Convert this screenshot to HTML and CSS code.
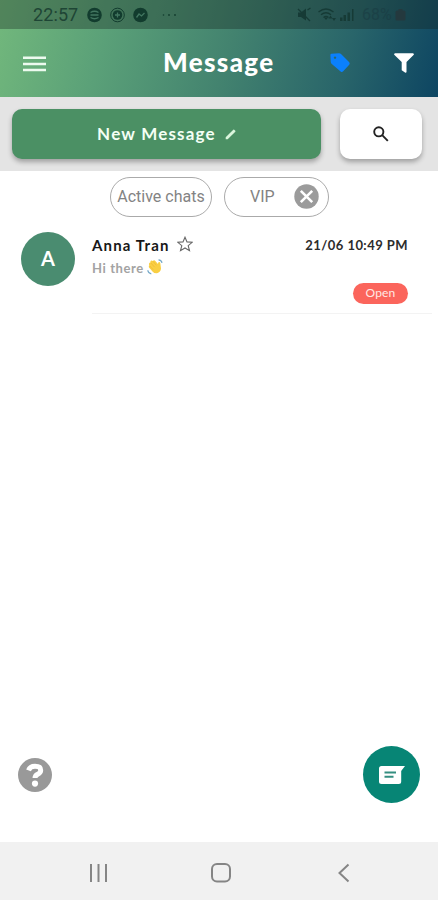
FILE: index.html
```html
<!DOCTYPE html>
<html lang="en">
<head>
<meta charset="utf-8">
<title>Message</title>
<link rel="stylesheet" href="styles.css">
</head>
<body>
<div class="screen">
  <div class="top">
    <div class="status">
      <span class="clock">22:57</span>
      <svg class="notes" width="90" height="16" viewBox="0 0 90 16">
        <circle cx="7.500" cy="8" r="7.300"/>
        <path class="cut" d="M3.500 5.500q4-2.500 8 0M3.500 8h8M3.500 10.500q4 2.500 8 0"/>
        <circle class="ring" cx="30.500" cy="8" r="6.800"/>
        <circle cx="30.500" cy="8" r="4.800"/>
        <path class="cut" d="M30.500 5.500v5M28 8h5"/>
        <circle cx="53.500" cy="8" r="7.300"/>
        <path class="cut" d="M49.500 10.500l2.500-3.500 2.500 2 3-3"/>
        <circle cx="76.500" cy="8" r=".8"/><circle cx="82" cy="8" r=".9"/><circle cx="88" cy="8" r=".9"/>
      </svg>
      <span class="spacer"></span>
      <svg class="signals" width="58" height="16" viewBox="0 0 58 16">
        <path d="M1 5.500h3l5-4v12l-5-3.500H1z"/>
        <path class="line" d="M1 2l12 12M10.500 3l3-2"/>
        <path class="line" d="M21.500 5q7.500-6 15 0M24 7.800q5-4 10 0M26.500 10.500q2.500-2 5 0"/>
        <path d="M27 10.500h4L29 13z"/>
        <path d="M33.500 8.500l2 3h-4zM37 14l-2-3h4zM43 10.500h2.500V14H43zM46.500 8H49v6h-2.500zM50.500 5.500H53V14h-2.500zM55 2h1.500v12H55z"/>
      </svg>
      <span class="percent">68%</span>
      <svg class="battery" width="11" height="14" viewBox="0 0 11 14"><path d="M3.500 1h4v1.500H9q1.500 0 1.500 1.500v7q0 1.500-1.500 1.500H2Q.5 12.500.5 11V4Q.5 2.500 2 2.500h1.500z"/></svg>
    </div>
    <div class="appbar">
      <svg class="menu" width="23" height="16" viewBox="0 0 23 16"><path d="M0 .5h23v2.500H0zM0 6.700h23v2.500H0zM0 12.800h23v2.500H0z"/></svg>
      <h1 class="title">Message</h1>
      <svg class="tag" width="20" height="20" viewBox="0 0 20 20"><path fill-rule="evenodd" d="M1.500.8 9 .3q1.200 0 2 .8l8 8q1.400 1.400 0 2.800l-5.800 6.400q-1.300 1.300-2.600.2L1.800 11Q.7 10 .7 8.500L.4 2Q.4.900 1.500.8zM5 3.400a1.200 1.200 0 1 0 .01 0z"/></svg>
      <svg class="filter" width="20" height="20" viewBox="0 0 20 20"><path d="M1 .3h18q1.500.6.5 1.800L12.500 9v10q-.3 1.200-1.500.5l-3.300-2.300V9L.5 2.100Q-.5.900 1 .3z"/></svg>
    </div>
  </div>
  <div class="tools">
    <button class="new"><span class="new-text">New Message</span>
      <svg width="11" height="11" viewBox="0 0 11 11"><path d="M.7 10.300V8.300L8.300.7q.4-.4.900 0l1.100 1.100q.4.500 0 .9L2.700 10.300z"/></svg>
    </button>
    <button class="search" aria-label="Search">
      <svg width="16" height="16" viewBox="0 0 16 16"><circle cx="5.800" cy="5.800" r="4.600"/><path d="M9.200 9.200l5.600 5.600"/></svg>
    </button>
  </div>
  <div class="chips">
    <span class="chip chats">Active chats</span>
    <span class="chip vip"><span>VIP</span>
      <svg width="25" height="25" viewBox="0 0 25 25"><circle cx="12.500" cy="12.500" r="12.200"/><path d="M6.800 6.800l11.400 11.400M18.200 6.800L6.800 18.200"/></svg>
    </span>
  </div>
  <div class="chat">
    <div class="avatar">A</div>
    <div class="body">
      <div class="line1">
        <span class="name">Anna Tran</span>
        <svg class="star" width="16" height="16" viewBox="0 0 16 16"><path d="M8 1.200l2 4.700 5.200.4-4 3.400 1.300 5L8 12l-4.500 2.700 1.300-5-4-3.400L6 5.900z"/></svg>
        <span class="spacer"></span>
        <span class="date">21/06 10:49 PM</span>
      </div>
      <div class="line2">
        <span class="preview">Hi there</span>
        <svg class="wave" width="16" height="16" viewBox="0 0 16 16">
          <path class="hand" d="M2 5.300Q1.700 3.500 3.500 3.600L3.400 2.300Q4.300.9 5.700 1.900L6.500 1.500Q7.500.9 8.300 1.900L11 5.100 11.200 3.500Q12.800 2.300 13.300 4.300L14 9.500Q13.700 13.300 10 14.200 7.300 14.500 5.500 12.400L2 8.500Q1.300 7.400 2.300 6.800z"/>
          <path class="finger" d="M3.700 3.800l4 4.400M5.900 2.200L9.300 6.300M2.500 6.700l3.700 4"/>
          <path class="motion" d="M11.500.9q3 .1 3.500 3M.8 11.300q.3 3 3.500 3.500"/>
        </svg>
      </div>
      <div class="line3"><span class="badge">Open</span></div>
    </div>
  </div>
  <div class="floor">
    <div class="help"><svg width="34" height="34" viewBox="0 0 34 34"><circle cx="17" cy="17" r="17"/><path d="M10.500 12.300Q12 8.300 17 8.300q5.700 0 5.700 3.900 0 2.500-3 4-2.700 1.300-2.700 3.900"/><circle class="dot" cx="17" cy="25.600" r="3.100"/></svg></div>
    <div class="compose"><svg width="26" height="18" viewBox="0 0 26 18"><path class="bubble" d="M2.500 0H26l-3.800 5v10.500q0 2.500-2.500 2.500H2.500Q0 18 0 15.500v-13Q0 0 2.500 0z"/><path class="rows" d="M5.500 6.500h11.500M5.500 10.800h9"/></svg></div>
  </div>
  <div class="nav">
    <svg width="20" height="20" viewBox="0 0 20 20"><path d="M3 1v18M10.500 1v18M18 1v18"/></svg>
    <svg width="20" height="20" viewBox="0 0 20 20"><rect x="1" y="1" width="18" height="17.500" rx="5"/></svg>
    <svg width="20" height="20" viewBox="0 0 20 20"><path d="M14.500 1.500L5.500 10l9 8.500"/></svg>
  </div>
</div>
</body>
</html>
```
FILE: styles.css
```css
* { box-sizing: border-box; }
body { margin: 0; background: #fff; font-family: Lato, "Open Sans", sans-serif; }
svg { display: block; flex: none; }
button { border: 0; padding: 0; font: inherit; }
.spacer { flex: 1; }
.screen { width: 438px; height: 900px; display: flex; flex-direction: column; overflow: hidden; }

.top { height: 97px; background: linear-gradient(105deg, #72b87c 0%, #5aa078 25%, #43836f 52%, #29656a 78%, #0d4562 100%); }
.status { height: 29px; background: rgba(20, 35, 30, .34); display: flex; align-items: center; padding: 0 32px 0 33px; }
.clock { font: 18px/29px Roboto, sans-serif; color: #1e4535; width: 46px; letter-spacing: .1px; }
.notes { margin-left: 8px; fill: #123c2e; }
.notes .cut { fill: none; stroke: #427660; stroke-width: 1.3; }
.notes .ring { fill: none; stroke: #123c2e; }
.signals { fill: #163b36; margin-right: 2px; }
.signals .line { fill: none; stroke: #163b36; stroke-width: 1.4; }
.percent { font: 16px/29px Roboto, sans-serif; color: #1a3c43; margin-left: 5px; width: 32px; opacity: .6; }
.battery { fill: #24393e; margin-left: 1px; }
.appbar { height: 68px; display: flex; align-items: center; padding: 0 24px 0 23px; }
.menu { fill: #edfaef; margin-top: 1px; }
.title { margin: -3px 0 0 117px; width: 112px; font-size: 26px; font-weight: 900; color: #fff; line-height: 34px; letter-spacing: 1.35px; white-space: nowrap; }
.tag { fill: #0b80fc; margin-left: 55px; }
.filter { fill: #fff; margin-left: auto; }

.tools { height: 74px; background: #e4e4e4; display: flex; padding: 12px 16px 12px 12px; gap: 19px; }
.new, .search { height: 50px; border-radius: 10px; box-shadow: 0 3px 5px rgba(0, 0, 0, .3); display: flex; align-items: center; justify-content: center; }
.new { width: 309px; background: #4b9064; color: #f4fff4; font-size: 17px; font-weight: 700; letter-spacing: 1.2px; gap: 9px; padding: 0 0 2px; }
.new svg { fill: #daf5dc; margin-top: 3px; }
.search { width: 82px; background: #fff; }
.search svg { fill: none; stroke: #222; stroke-width: 1.9; }

.chips { height: 46px; display: flex; gap: 12px; padding: 6px 0 0 110px; font: 16px/38px Roboto, sans-serif; color: #838383; }
.chip { height: 40px; border: 1px solid #aaa; border-radius: 20px; display: flex; align-items: center; }
.chats { width: 102px; justify-content: center; white-space: nowrap; }
.vip { width: 105px; padding: 0 9px 0 25px; justify-content: space-between; }
.vip svg { fill: #9b9b9b; margin-top: -2px; }
.vip svg path { stroke: #fff; stroke-width: 2.6; }

.chat { height: 97px; display: flex; padding-left: 21px; }
.avatar { width: 54px; height: 54px; margin-top: 15px; border-radius: 50%; background: #4a8c70; color: #fff; font: 700 20px/52px Lato, sans-serif; text-align: center; }
.body { margin-left: 17px; width: 340px; border-bottom: 1px solid #f3f3f3; padding-top: 16px; }
.line1, .line2, .line3 { display: flex; align-items: center; padding-right: 24px; white-space: nowrap; }
.line1 { height: 23px; }
.name { font-size: 15px; font-weight: 700; color: #181818; letter-spacing: 1.15px; }
.star { margin-left: 7px; margin-top: -2px; fill: none; stroke: #666; stroke-width: 1.1; }
.date { font-size: 13px; font-weight: 700; color: #2c2c2c; letter-spacing: .45px; }
.line2 { height: 24px; }
.preview { font-size: 13px; font-weight: 700; color: #a3a3a3; letter-spacing: .6px; }
.wave { margin-left: 3px; margin-top: -2px; }
.hand { fill: #f9cf43; }
.finger { fill: none; stroke: #e8ad2d; stroke-width: .5; }
.motion { fill: none; stroke: #75a9c8; stroke-width: 1.2; }
.line3 { height: 24px; justify-content: flex-end; padding-top: 2px; }
.badge { width: 55px; height: 21px; border-radius: 11px; background: #fb655c; color: #ffe9e5; font-size: 12px; line-height: 19px; letter-spacing: .2px; text-align: center; }

.floor { flex: 1; display: flex; align-items: flex-end; justify-content: space-between; padding: 0 18px 39px; }
.help { margin-bottom: 11px; }
.help svg { fill: #999; }
.help path { fill: none; stroke: #fff; stroke-width: 5; }
.help .dot { fill: #fff; }
.compose { width: 57px; height: 57px; border-radius: 50%; background: #078575; display: flex; align-items: center; justify-content: center; }
.bubble { fill: #fff; }
.rows { fill: none; stroke: #348e80; stroke-width: 2; }
.nav { height: 58px; background: #f1f1f1; display: flex; justify-content: space-between; padding: 21px 84px 0 88px; }
.nav svg { fill: none; stroke: #858585; stroke-width: 2; }
```
